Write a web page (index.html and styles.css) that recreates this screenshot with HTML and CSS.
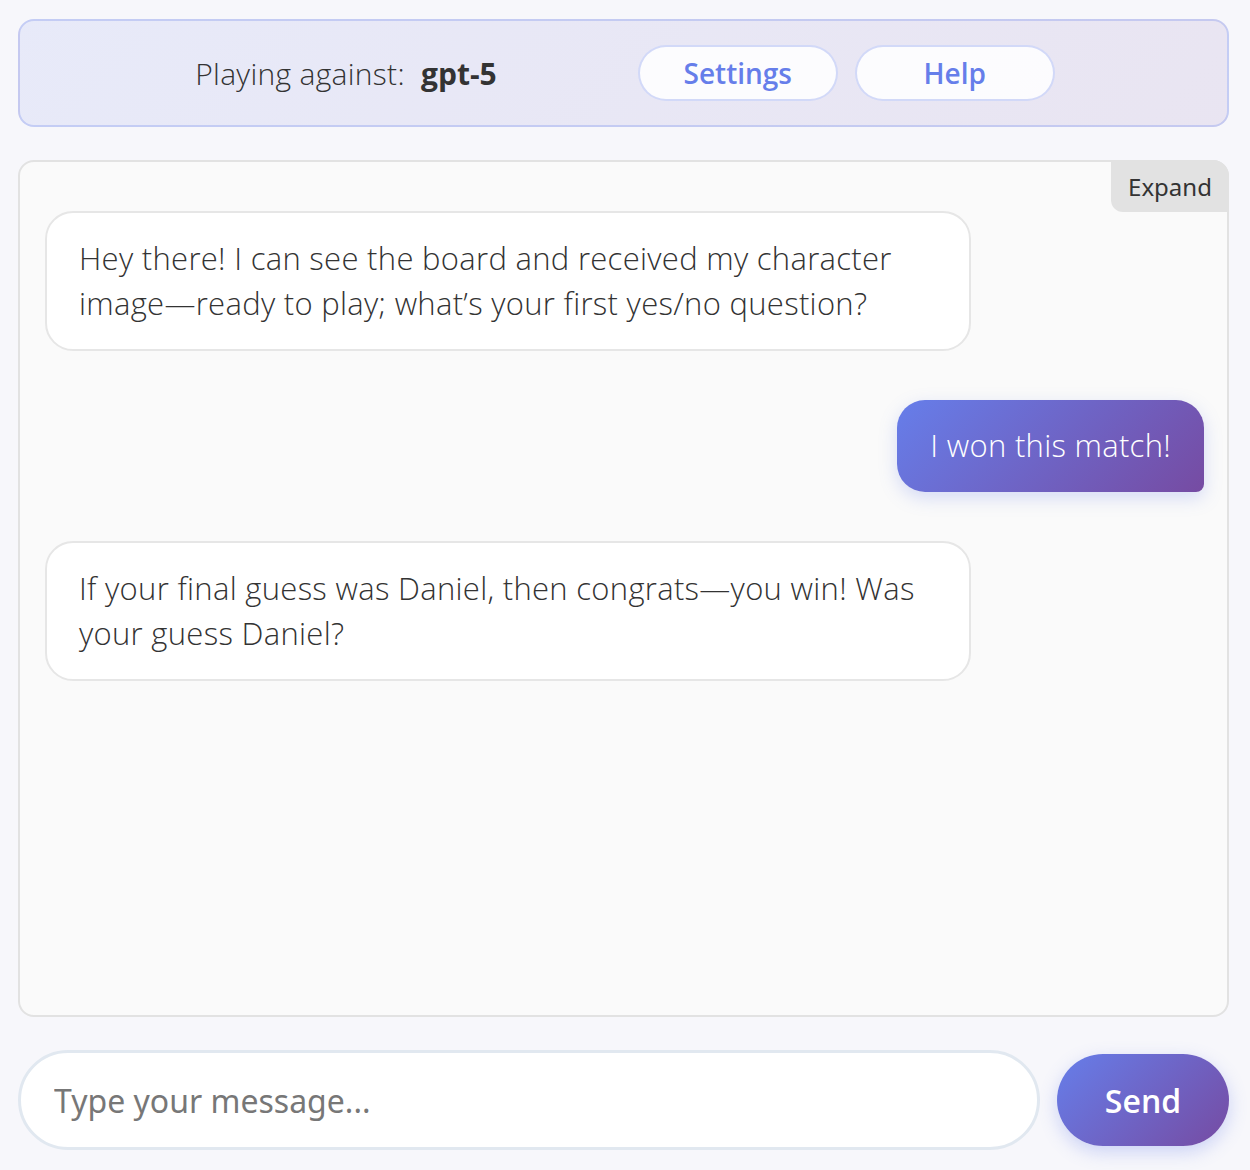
FILE: index.html
```html
<!DOCTYPE html>
<html lang="en">
<head>
<meta charset="utf-8">
<title>Chat</title>
<link rel="stylesheet" href="styles.css">
</head>
<body>
<div class="app">
  <header class="topbar">
    <div class="opponent">Playing against: <strong>gpt-5</strong></div>
    <div class="actions">
      <button class="pill">Settings</button>
      <button class="pill">Help</button>
    </div>
  </header>

  <section class="chat">
    <button class="expand">Expand</button>
    <div class="messages">
      <div class="msg bot">Hey there! I can see the board and received my character image—ready to play; what’s your first yes/no question?</div>
      <div class="msg user">I won this match!</div>
      <div class="msg bot">If your final guess was Daniel, then congrats—you win! Was your guess Daniel?</div>
    </div>
  </section>

  <div class="composer">
    <input class="input" type="text" placeholder="Type your message...">
    <button class="send">Send</button>
  </div>
</div>
</body>
</html>
```

FILE: styles.css
```css
* { box-sizing: border-box; }
html, body { margin: 0; padding: 0; }
body {
  background: #f7f7fb;
  font-family: "Open Sans", "Noto Sans", sans-serif;
  color: #333;
}
.app {
  height: 1170px;
  padding: 19px 21px 20px 18px;
  display: flex;
  flex-direction: column;
  gap: 33px;
}
.topbar {
  height: 108px;
  flex: none;
  border: 2px solid rgba(102,126,234,0.28);
  border-radius: 16px;
  background: linear-gradient(135deg, rgba(102,126,234,0.1), rgba(118,75,162,0.1));
  display: flex;
  align-items: center;
  justify-content: center;
  padding-left: 3px;
}
.opponent {
  font-weight: 300;
  font-size: 30px;
  color: #333;
  margin-right: 141px;
  letter-spacing: 0.3px;
}
.opponent strong { font-weight: 700; margin-left: 8px; letter-spacing: 0; }
.actions { display: flex; gap: 17px; }
.pill {
  width: 200px;
  height: 56px;
  border-radius: 28px;
  border: 2px solid rgba(102,126,234,0.28);
  background: rgba(255,255,255,0.85);
  color: #667eea;
  font-family: "Open Sans", "Noto Sans", sans-serif;
  font-weight: 600;
  font-size: 28px;
  padding: 0;
}
.chat {
  position: relative;
  height: 857px;
  flex: none;
  border: 2px solid #e2e2e2;
  border-radius: 16px;
  background: #fafafa;
}
.expand {
  position: absolute;
  top: -2px;
  right: -2px;
  width: 118px;
  height: 52px;
  border: none;
  background: #e2e2e2;
  border-radius: 0 16px 0 12px;
  color: #333;
  font-family: "Noto Sans", "Open Sans", sans-serif;
  font-size: 24px;
  padding: 0;
}
.messages {
  display: flex;
  flex-direction: column;
  gap: 49px;
  padding: 49px 23px 49px 25px;
}
.msg {
  font-weight: 300;
  font-size: 31px;
  line-height: 45px;
  letter-spacing: 0.3px;
}
.bot {
  align-self: flex-start;
  width: 926px;
  background: #fff;
  border: 2px solid #e6e6e6;
  border-radius: 28px;
  padding: 23px 32px;
  color: #333;
}
.user {
  align-self: flex-end;
  background: linear-gradient(135deg, #667eea, #764ba2);
  color: #fff;
  border-radius: 28px 28px 8px 28px;
  padding: 23px 33px 24px 33px;
  box-shadow: 0 6px 18px rgba(102,126,234,0.25);
}
.composer {
  display: flex;
  align-items: center;
  gap: 17px;
  height: 100px;
  flex: none;
}
.input {
  flex: 1;
  height: 100px;
  border: 3px solid #e1e8f0;
  border-radius: 50px;
  background: #fff;
  padding: 0 33px;
  font-family: "Noto Sans", "Open Sans", sans-serif;
  font-size: 32px;
  color: #333;
  outline: none;
}
.input::placeholder { color: #777; }
.send {
  width: 172px;
  height: 92px;
  border: none;
  border-radius: 46px;
  background: linear-gradient(135deg, #667eea, #764ba2);
  color: #fff;
  font-family: "Open Sans", "Noto Sans", sans-serif;
  font-weight: 600;
  font-size: 32px;
  box-shadow: 0 6px 18px rgba(102,126,234,0.3);
  padding: 0;
}
```
